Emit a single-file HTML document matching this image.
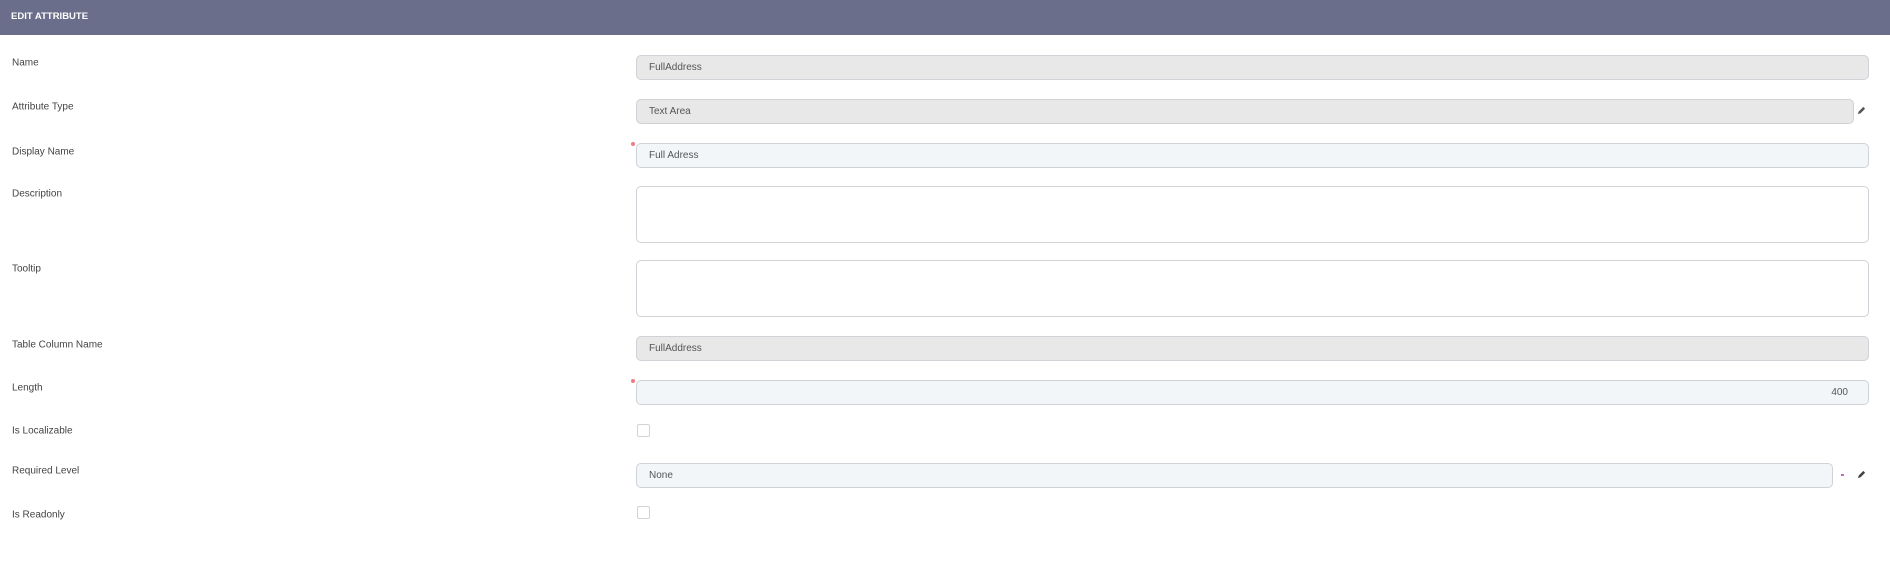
<!DOCTYPE html>
<html><head><style>
body{margin:0;width:1890px;height:563px;background:#fff;font-family:"Liberation Sans",sans-serif;position:relative;overflow:hidden}
.hd{position:absolute;left:0;top:0;width:1890px;height:35px;background:#6b6e8a;color:#fff;font-weight:bold;font-size:9.5px;line-height:33px;padding-left:11px;box-sizing:border-box}
.l{position:absolute;left:12px;font-size:10px;color:#444;transform:translateY(-50%)}
.i{position:absolute;left:636px;box-sizing:border-box;border:1px solid #cfd2d6;border-radius:5px;font-size:10px;color:#555;padding-left:12px;line-height:24px}
.g{background:#e8e8e8}.b{background:#f3f6f9}.w{background:#fff}
.cb{position:absolute;left:637px;width:13px;height:13px;border:1px solid #d3d3d3;border-radius:2px;box-sizing:border-box}
.dot{position:absolute;width:4px;height:4px;border-radius:50%;background:#f07a85}
.pen{position:absolute;width:9px;height:9px}
</style></head><body>
<div class="hd">EDIT ATTRIBUTE</div>
<div class="l" style="top:63px">Name</div>
<div class="l" style="top:107px">Attribute Type</div>
<div class="l" style="top:152px">Display Name</div>
<div class="l" style="top:194px">Description</div>
<div class="l" style="top:269px">Tooltip</div>
<div class="l" style="top:345px">Table Column Name</div>
<div class="l" style="top:388px">Length</div>
<div class="l" style="top:431px">Is Localizable</div>
<div class="l" style="top:471px">Required Level</div>
<div class="l" style="top:515px">Is Readonly</div>

<div class="i g" style="top:55px;width:1233px;height:25px">FullAddress</div>
<div class="i g" style="top:99px;width:1218px;height:25px">Text Area</div>
<svg class="pen" style="left:1857px;top:106px" viewBox="0 0 10 10"><path d="M1 9 L2 6 L7 1 L9 3 L4 8 Z" fill="#555"/></svg>
<div class="dot" style="left:631px;top:142px"></div>
<div class="i b" style="top:143px;width:1233px;height:25px">Full Adress</div>
<div class="i w" style="top:186px;width:1233px;height:57px"></div>
<div class="i w" style="top:260px;width:1233px;height:57px"></div>
<div class="i g" style="top:336px;width:1233px;height:25px">FullAddress</div>
<div class="dot" style="left:631px;top:379px"></div>
<div class="i b" style="top:380px;width:1233px;height:25px;text-align:right;padding-right:20px">400</div>
<div class="cb" style="top:424px"></div>
<div class="i b" style="top:463px;width:1197px;height:25px">None</div>
<div style="position:absolute;left:1841px;top:474px;width:3px;height:2px;background:#c06ac0"></div>
<svg class="pen" style="left:1857px;top:470px" viewBox="0 0 10 10"><path d="M1 9 L2 6 L7 1 L9 3 L4 8 Z" fill="#444"/></svg>
<div class="cb" style="top:506px"></div>
</body></html>
